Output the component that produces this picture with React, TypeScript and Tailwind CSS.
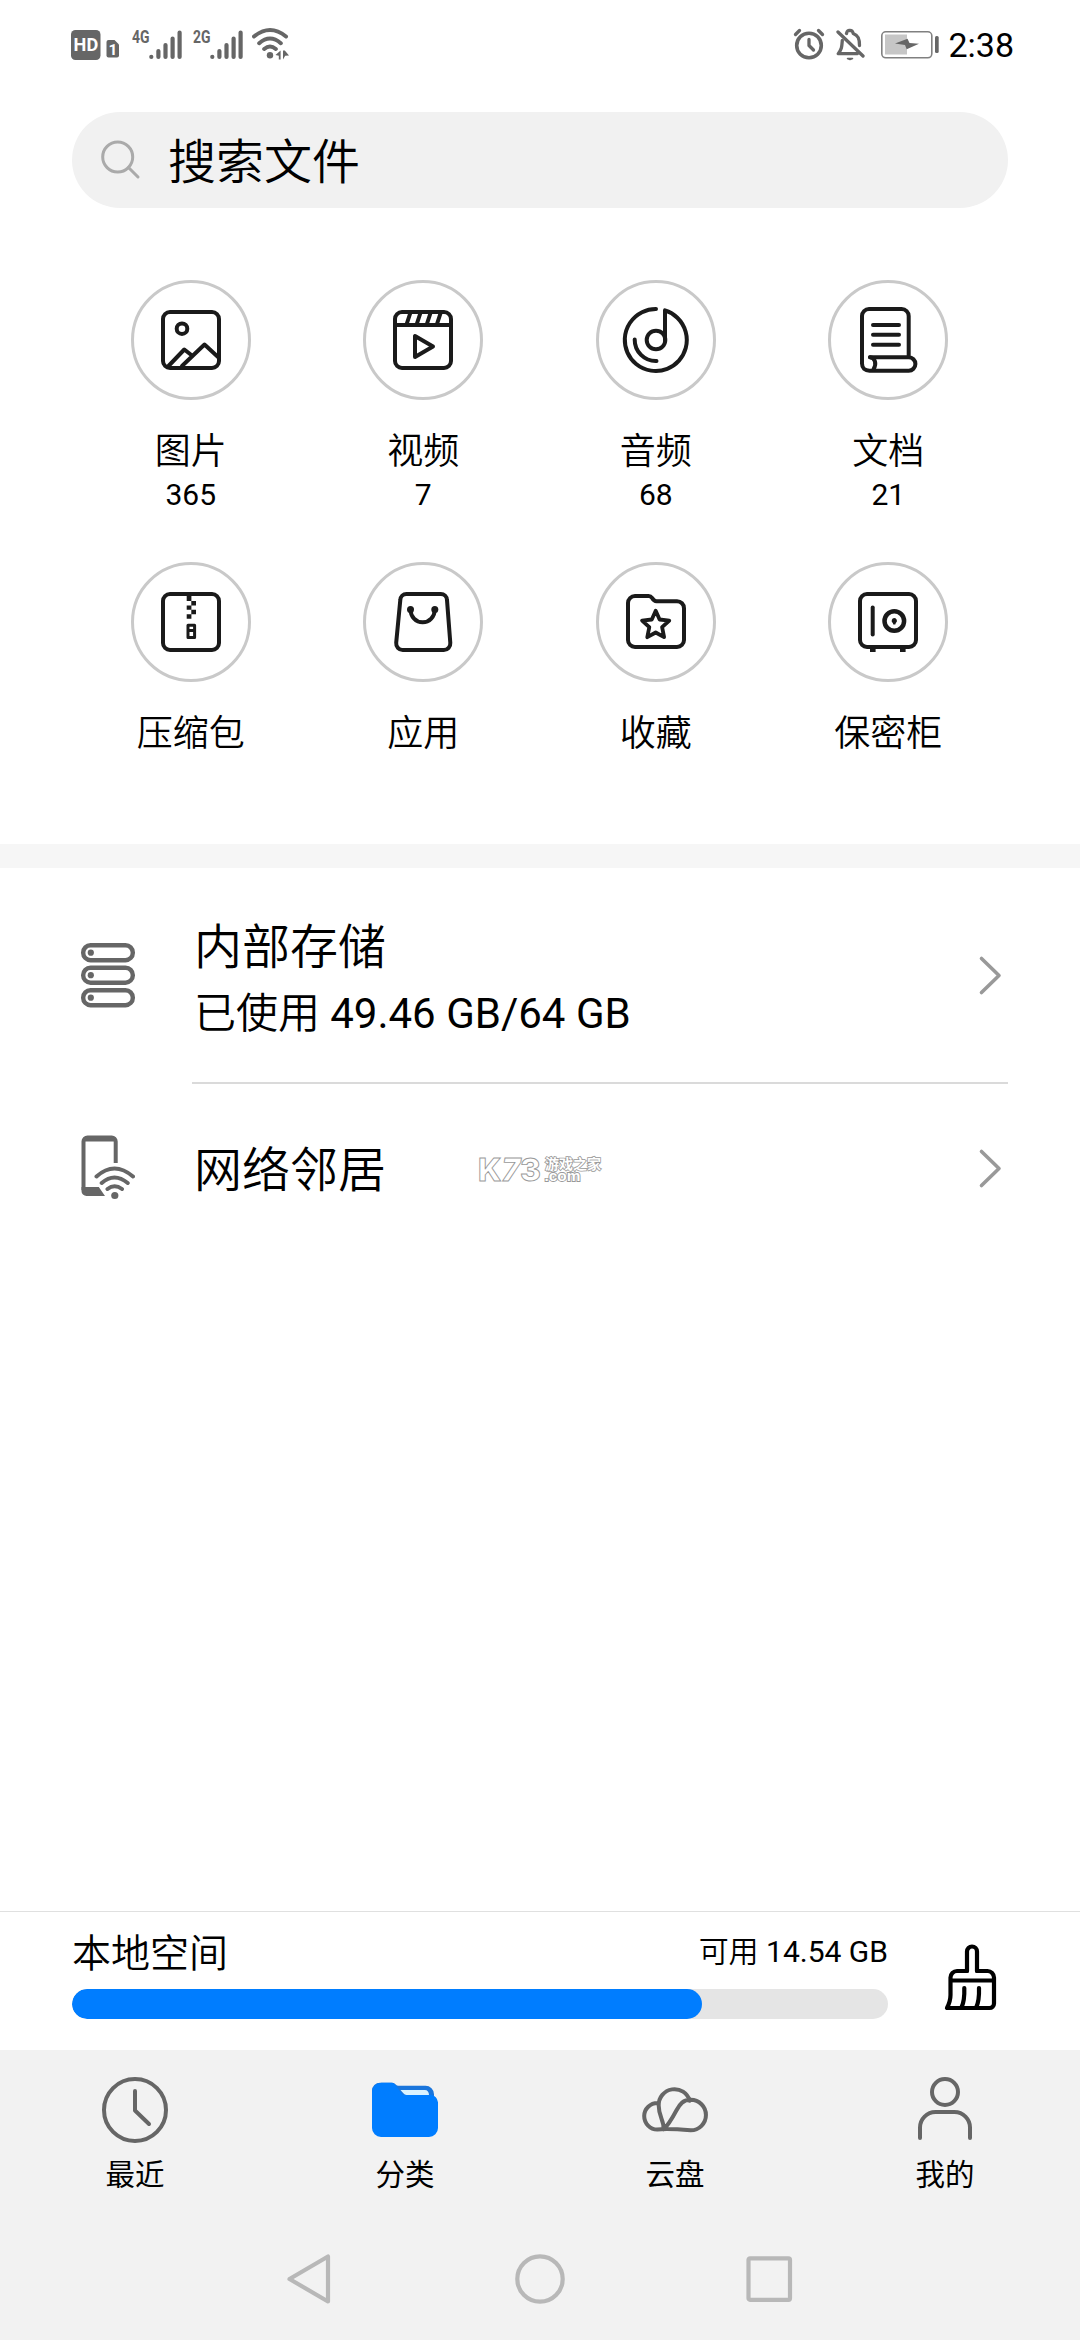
import type { ReactNode } from 'react';

function SignalBars({ label }: { label: string }) {
  return (
    <svg width="50" height="34" viewBox="0 0 50 34" fill="none" stroke="#666" strokeWidth="4.2" strokeLinecap="round">
      <text x="0" y="15.5" fill="#666" stroke="none" fontFamily="Roboto, sans-serif" fontWeight="700" fontSize="18.5" textLength="17.5" lengthAdjust="spacingAndGlyphs">
        {label}
      </text>
      <path d="M19.3 29.8v.2M26.4 24v6M33.5 18v12M40.6 11.5V30M47.6 5.5V30" />
    </svg>
  );
}

function StatusBar() {
  return (
    <header className="flex h-[112px] shrink-0 items-start pt-[27px] pr-[66px] pl-[71px]">
      <svg width="49" height="34" viewBox="0 0 49 34">
        <rect x="0" y="3" width="29.5" height="30" rx="4.5" fill="#666" />
        <text x="2.6" y="24.2" fill="#fff" fontFamily="Roboto, sans-serif" fontWeight="700" fontSize="18.5" textLength="24.6" lengthAdjust="spacingAndGlyphs">
          HD
        </text>
        <path d="M37.5 13h6l4.500 4.500v11a2 2 0 0 1-2 2h-8.500a2 2 0 0 1-2-2v-13.500a2 2 0 0 1 2-2z" fill="#666" />
        <text x="37.5" y="27.6" fill="#fff" fontFamily="Roboto, sans-serif" fontWeight="700" fontSize="15.500">
          1
        </text>
      </svg>
      <div className="ml-3">
        <SignalBars label="4G" />
      </div>
      <div className="ml-[11px]">
        <SignalBars label="2G" />
      </div>
      <svg className="ml-[9px]" width="38" height="34" viewBox="0 0 38 34" fill="none" stroke="#666" strokeWidth="4" strokeLinecap="round">
        <path d="M2 9.500Q18 -3.500 34 9.500M7.200 16.200Q18 6.800 28.800 16.200M12.200 22Q18 17 23.800 22" />
        <circle cx="18" cy="28.200" r="3.200" fill="#666" stroke="none" />
        <path d="M28.600 23.500v9h-1.800v-3.700l-3.300-.8zM31 32.500v-9h1.800l4.200 5-3.800.2z" fill="#666" stroke="none" />
      </svg>

      <svg className="ml-auto" width="32" height="34" viewBox="0 0 32 34" fill="none" stroke="#666" strokeWidth="3.600" strokeLinecap="round" strokeLinejoin="round">
        <circle cx="16" cy="18.500" r="12.300" />
        <path d="M16 12.500v6l4.500 4.500M2.500 7.500l4-4M29.500 7.500l-4-4" strokeWidth="3.300" />
      </svg>
      <svg className="ml-[11px]" width="30" height="34" viewBox="0 0 30 34" fill="none" stroke="#666" strokeWidth="3.300" strokeLinecap="round" strokeLinejoin="round">
        <path d="M2 5l25 24" />
        <path d="M6.300 13.500c-.5 6.500-.5 8.500-4 13.200h19M10.500 6.500C11.500 3 12.500 3.500 14 3.500s2.500 0 3.200 3c5 2 6.300 5 6.300 12" />
        <path d="M11.500 31.500h5l-2.500 1z" strokeWidth="1.500" fill="#666" />
      </svg>
      <svg className="ml-[15px]" width="58" height="34" viewBox="0 0 58 34">
        <rect x=".8" y="4.800" width="50" height="26" rx="4" fill="none" stroke="#808080" strokeWidth="1.600" />
        <rect x="4" y="7.500" width="22" height="20" fill="#c6c6c6" />
        <path d="M14 16.500l12.500-4.800 2 4.300 9.500.8-12.300 5.500-1.700-4.300z" fill="#666" />
        <rect x="54" y="9" width="3.700" height="17" rx="1.500" fill="#666" />
      </svg>
      <span className="ml-[9px] text-[34px] leading-9 text-black">2:38</span>
    </header>
  );
}

function SearchBar() {
  return (
    <div className="mx-[72px] flex h-24 shrink-0 items-center rounded-full bg-[#f1f1f1] pl-7">
      <svg width="42" height="42" viewBox="0 0 42 42" fill="none" stroke="#aaa" strokeWidth="3" strokeLinecap="round">
        <circle cx="17.700" cy="18" r="15" />
        <path d="M28.500 28.500l9.500 9.500" />
      </svg>
      <span className="ml-[26px] pt-1.5 text-5xl leading-[60px] font-[350] text-black">搜索文件</span>
    </div>
  );
}

const icons: Record<string, ReactNode> = {
  picture: (
    <>
      <rect x="32" y="32" width="56" height="56" rx="7" />
      <circle cx="51" cy="48.700" r="5.300" />
      <path d="M37.500 86L53.300 69.500l7 5.500M51 86l22.500-21.500L87 77" />
    </>
  ),
  video: (
    <>
      <rect x="32" y="32" width="56" height="56" rx="7" />
      <path d="M32 45h56" />
      <path d="M43.700 44l3.600-11M53.800 44l3.600-11M63.900 44l3.600-11M74 44l3.600-11" strokeLinecap="butt" />
      <path d="M52 56v21l18-10.500z" />
    </>
  ),
  audio: (
    <>
      <path d="M60 29a31 31 0 1 0 9 1.400V60" />
      <circle cx="60" cy="60" r="9.300" />
      <path d="M38.700 59.500A21.200 21.200 0 0 0 60.500 81" />
    </>
  ),
  document: (
    <>
      <path d="M80.700 76V36a7 7 0 0 0-7-7H41a7 7 0 0 0-7 7v47.500c0 4.500 3 7.200 7.500 7.200h39.200a6.700 6.700 0 0 0 0-13.400H42" />
      <path d="M42 77.300c5 .5 7 6.500 3.500 12" />
      <path d="M45 45h26M45 54.800h26M45 64.700h26" />
    </>
  ),
  archive: (
    <>
      <rect x="32" y="32" width="56" height="56" rx="7" />
      <path d="M55.700 34h4.700v5h-4.700zM60.300 39H65v4.400h-4.700zM55.700 43.400h4.700v4.400h-4.700zM60.300 47.800H65v4.400h-4.700zM55.700 52.200h4.700v4.500h-4.700z" fill="#1a1a1a" stroke="none" />
      <path d="M57 63.300h6.600v12.200H57zM57 68.500h6.600" strokeWidth="3" />
    </>
  ),
  app: (
    <>
      <path d="M43.500 32h34.300a6.300 6.300 0 0 1 6.200 6l3.300 42.800a6.600 6.600 0 0 1-6.500 7.200H39.700a6.600 6.600 0 0 1-6.500-7.200L37.300 38a6.300 6.300 0 0 1 6.200-6z" />
      <path d="M47.500 47.500a12 12.700 0 0 0 24.300 0" />
      <circle cx="47.500" cy="47.500" r="3.500" fill="#1a1a1a" stroke="none" />
      <circle cx="71.800" cy="47.500" r="3.500" fill="#1a1a1a" stroke="none" />
    </>
  ),
  favorite: (
    <>
      <path d="M32 78V41a7 7 0 0 1 7-7h13.500c2 0 2.500.3 3.500 1.800 1.200 2.200 2 3.400 4.500 3.400H81a7 7 0 0 1 7 7V78a7 7 0 0 1-7 7H39a7 7 0 0 1-7-7z" />
      <path d="M59.700 48.800l3.900 8.700 9.700 1.100-7.200 6.600 2 10-8.400-4.700-8.400 4.700 2-10-7.200-6.600 9.700-1.100z" strokeWidth="3.800" />
    </>
  ),
  safe: (
    <>
      <rect x="32" y="32" width="56" height="53" rx="7" />
      <path d="M44.700 45.500v27" />
      <circle cx="66.300" cy="59" r="9.800" strokeWidth="4.500" />
      <path d="M42 86h5.600v4H42zM72 86h5.600v4H72zM66.300 56a2.700 2.700 0 0 1 1.500 4.900l-.5 1.600h-2l-.5-1.600A2.700 2.700 0 0 1 66.300 56z" fill="#1a1a1a" stroke="none" />
    </>
  ),
};

const categories = [
  { icon: 'picture', label: '图片', count: '365' },
  { icon: 'video', label: '视频', count: '7' },
  { icon: 'audio', label: '音频', count: '68' },
  { icon: 'document', label: '文档', count: '21' },
  { icon: 'archive', label: '压缩包' },
  { icon: 'app', label: '应用' },
  { icon: 'favorite', label: '收藏' },
  { icon: 'safe', label: '保密柜' },
];

function CategoryGrid() {
  return (
    <section className="grid h-[636px] shrink-0 auto-rows-[282px] grid-cols-4 pt-[72px] pr-[75.5px] pl-[74.5px] text-black">
      {categories.map((c) => (
        <div key={c.label} className="flex flex-col items-center">
          <div className="size-[120px] rounded-full border-[3px] border-[#c9c9c9]">
            <svg className="-m-[3px]" width="120" height="120" viewBox="0 0 120 120" fill="none" stroke="#1a1a1a" strokeWidth="4" strokeLinecap="round" strokeLinejoin="round">
              {icons[c.icon]}
            </svg>
          </div>
          <span className="mt-[29px] text-4xl leading-[46px] font-[350]">{c.label}</span>
          {c.count && <span className="text-[30px] leading-10">{c.count}</span>}
        </div>
      ))}
    </section>
  );
}

function Chevron() {
  return (
    <svg className="ml-auto" width="30" height="44" viewBox="0 0 30 44" fill="none" stroke="#999" strokeWidth="3.600" strokeLinecap="round" strokeLinejoin="round">
      <path d="M3.500 5.500l17.500 17-17.500 17" />
    </svg>
  );
}

function StorageIcon() {
  return (
    <svg width="54" height="66" viewBox="0 0 54 66" fill="none" stroke="#666" strokeWidth="4.400">
      {[3.200, 25.700, 48.200].map((y) => (
        <g key={y}>
          <rect x="2.200" y={y} width="49.600" height="15" rx="7.300" />
          <circle cx="9.800" cy={y + 7.500} r="3.100" fill="#666" stroke="none" />
        </g>
      ))}
    </svg>
  );
}

function NetworkIcon() {
  return (
    <svg width="54" height="66" viewBox="0 0 54 66" fill="none" stroke="#666" strokeWidth="4">
      <path d="M34.700 28V6.500a4 4 0 0 0-4-4H6.500a4 4 0 0 0-4 4V55" />
      <path d="M4 1.500h29v5H4zM.5 52h17.300l6.200 9H5.500a5 5 0 0 1-5-5z" fill="#666" stroke="none" />
      <path d="M15.500 41.500q17.800-16 36.500 0M20.700 48q12.600-11 26 0M26.500 54q7-5.500 14.500 0" strokeLinecap="round" />
      <circle cx="33.800" cy="60.500" r="3.600" fill="#666" stroke="none" />
    </svg>
  );
}

function Watermark() {
  return (
    <svg className="ml-[90px]" width="132" height="56" viewBox="-2 -6 132 56" fill="#fff" stroke="#999" strokeWidth="0.900">
      <text x="0" y="35" fontFamily="Inter, sans-serif" fontWeight="800" fontSize="31" textLength="63" lengthAdjust="spacingAndGlyphs">
        K<tspan fontStyle="italic">7</tspan>3
      </text>
      <text x="67" y="22.500" fontFamily="'Noto Sans CJK SC', sans-serif" fontWeight="700" fontSize="14" strokeWidth="1.600" paintOrder="stroke">
        游戏之家
      </text>
      <text x="66.500" y="35" fontFamily="'Liberation Sans', sans-serif" fontWeight="700" fontSize="15" textLength="36" lengthAdjust="spacingAndGlyphs" strokeWidth="1.800" paintOrder="stroke">
        .com
      </text>
    </svg>
  );
}

function StorageList() {
  return (
    <section className="flex flex-1 flex-col text-black">
      <div className="flex h-[214px] items-center pr-[72px] pl-[81px]">
        <StorageIcon />
        <div className="ml-[59px] flex flex-col pt-3 font-[350]">
          <span className="text-5xl leading-[66px]">内部存储</span>
          <span className="text-[42px] leading-[66px]">
            已使用 <span className="font-normal">49.46 GB/64 GB</span>
          </span>
        </div>
        <Chevron />
      </div>
      <div className="mr-[72px] ml-[192px] h-0.5 bg-[#dadada]" />
      <div className="flex h-[168px] items-center pr-[72px] pl-[81px]">
        <NetworkIcon />
        <span className="ml-[59px] pt-1.5 text-5xl leading-[66px] font-[350]">网络邻居</span>
        <Watermark />
        <Chevron />
      </div>
    </section>
  );
}

const local = { used: 49.46, total: 64.11 };

function BrushIcon() {
  return (
    <svg width="54" height="70" viewBox="0 0 54 70" fill="none" stroke="#000" strokeWidth="4.200" strokeLinecap="round" strokeLinejoin="round">
      <path d="M23 28V8.500a5 5 0 0 1 10 0V28" />
      <path d="M23 28H13a6.500 6.500 0 0 0-6.500 6.500V52c0 5-1 8-3.500 13h42.500a4.500 4.500 0 0 0 4.500-4.500v-26a6.500 6.500 0 0 0-6.500-6.500H33M6.500 37.500H50M20.300 45c.3 9-.2 14-2.800 19.500M35 45c.3 9-.2 14-2.800 19.500" />
    </svg>
  );
}

function LocalSpace() {
  return (
    <section className="flex h-[139px] shrink-0 border-t border-[#e0e0e0] pl-[72px] text-black">
      <div className="flex w-[816px] flex-col pt-[11px]">
        <div className="flex h-[66px] items-center justify-between pb-1">
          <span className="text-[39px] leading-[56px] font-[350]">本地空间</span>
          <span className="pb-1 text-[30px] leading-10">
            <span className="font-[350]">可用</span> 14.54 GB
          </span>
        </div>
        <div className="h-[30px] overflow-hidden rounded-full bg-[#e5e5e5]">
          <div className="h-full rounded-full bg-[#007dff]" style={{ width: `${(local.used / local.total) * 100}%` }} />
        </div>
      </div>
      <div className="mt-[31px] ml-[56px]">
        <BrushIcon />
      </div>
    </section>
  );
}

const tabs: { label: string; icon: ReactNode }[] = [
  {
    label: '最近',
    icon: (
      <>
        <circle cx="36" cy="36" r="31" />
        <path d="M36 17v19.500l14 13.500" />
      </>
    ),
  },
  {
    label: '分类',
    icon: (
      <g stroke="none">
        <path d="M11 8.700h12.500c2.500 0 3.500 3 5.500 3h27.500a8.500 8.500 0 0 1 8.500 8.500V40H3V16.700a8 8 0 0 1 8-8z" fill="#1a75dc" />
        <path d="M3 18.500a9.500 9.500 0 0 1 9.500-9.800h10c2 0 3 1 4.500 3l6.500 9H62a9 9 0 0 1 7 7.500V54a9 9 0 0 1-9 9H12a9 9 0 0 1-9-9z" fill="#007dff" />
        <path d="M31.500 16h24.300c2.700 0 4.200 2 4.200 5H37.500c-2.500-.3-3.800-2.500-6-5z" fill="#d9f2ff" />
      </g>
    ),
  },
  {
    label: '云盘',
    icon: (
      <path d="M24.500 55.500c1-9-4.800-12-4.800-24a15.800 15.800 0 0 1 31-4.800M18.500 29c-7 0-13.300 5.500-13.300 13s6 13.500 13 13.500c9-1.500 20-.5 33.500.8a15.250 15.250 0 0 0 0-30.500c-7.500 0-10.700 4-14.200 10.500-4 7.500-8 15-13 19" />
    ),
  },
  {
    label: '我的',
    icon: (
      <>
        <circle cx="36" cy="18" r="13" />
        <path d="M11 64V53.500A15.500 15.500 0 0 1 26.500 38h19A15.500 15.500 0 0 1 61 53.500V64" />
      </>
    ),
  },
];

function TabBar() {
  return (
    <nav className="grid h-[168px] shrink-0 grid-cols-4 bg-[#f2f2f2] pt-6 text-black">
      {tabs.map((t) => (
        <div key={t.label} className="flex flex-col items-center">
          <svg width="72" height="72" viewBox="0 0 72 72" fill="none" stroke="#666" strokeWidth="4" strokeLinecap="round" strokeLinejoin="round">
            {t.icon}
          </svg>
          <span className="mt-[9px] text-[29.500px] leading-10">{t.label}</span>
        </div>
      ))}
    </nav>
  );
}

function SystemNav() {
  return (
    <footer className="flex h-[122px] shrink-0 items-center justify-center gap-[176px] bg-[#f2f2f2]">
      <svg width="54" height="54" viewBox="0 0 54 54" fill="none" stroke="#b8b8b8" strokeWidth="4.200" strokeLinejoin="round">
        <path d="M45 4.500v45L6.500 27z" />
      </svg>
      <svg width="54" height="54" viewBox="0 0 54 54" fill="none" stroke="#b8b8b8" strokeWidth="4.200">
        <circle cx="27" cy="27" r="22.700" />
      </svg>
      <svg width="54" height="54" viewBox="0 0 54 54" fill="none" stroke="#b8b8b8" strokeWidth="4.200">
        <rect x="5.500" y="6.300" width="41.500" height="41.500" rx="1.500" />
      </svg>
    </footer>
  );
}

export default function App() {
  return (
    <div className="flex h-[2340px] w-[1080px] flex-col overflow-hidden bg-white font-[Roboto,'Noto_Sans_CJK_SC',sans-serif]">
      <StatusBar />
      <SearchBar />
      <CategoryGrid />
      <div className="h-6 shrink-0 bg-[#f6f6f6]" />
      <StorageList />
      <LocalSpace />
      <TabBar />
      <SystemNav />
    </div>
  );
}
